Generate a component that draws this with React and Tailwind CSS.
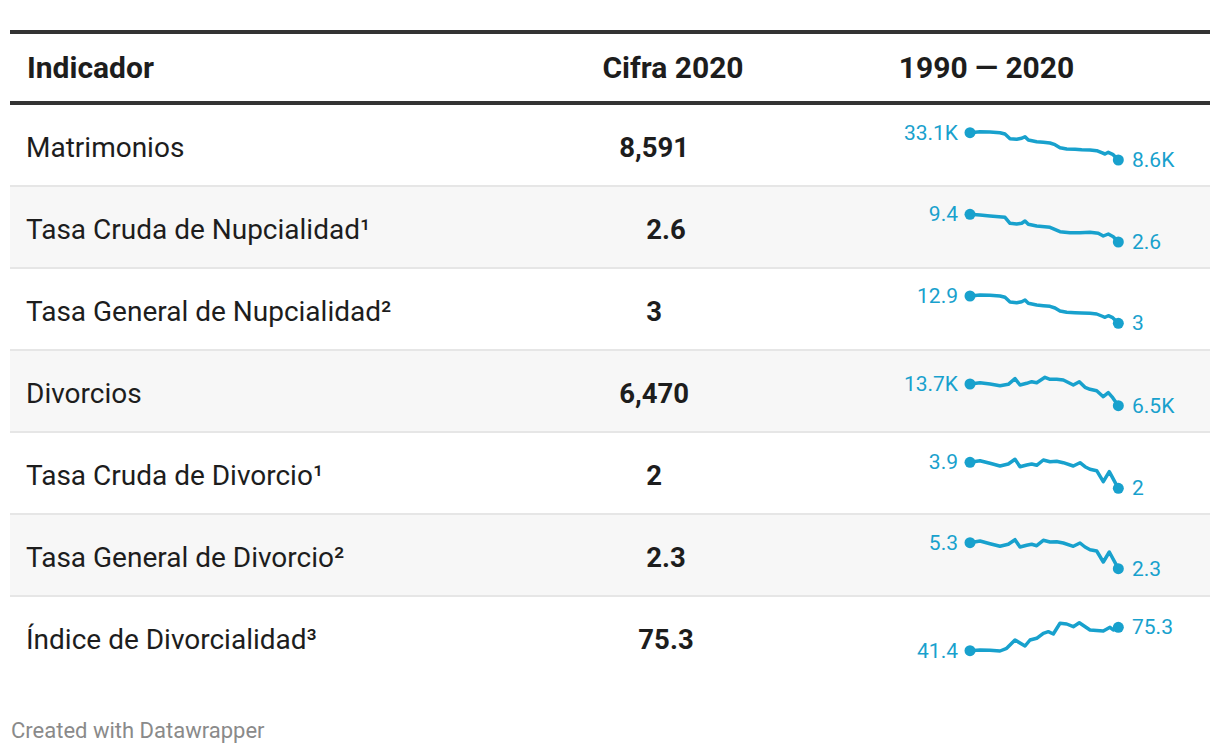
import React from "react";

const M1 = [[240,68],[270,65],[300,66],[330,68],[345,72],[360,86],[380,88],[395,85],[405,80],[415,90],[440,95],[460,97],[480,99],[495,104],[510,113],[530,117],[555,118],[575,119],[600,120],[620,122],[635,128],[645,132],[655,127],[668,133],[685,150]];
const M2 = [[240,313],[270,315],[300,318],[345,322],[360,340],[380,342],[395,340],[405,333],[415,343],[440,348],[480,352],[510,365],[540,368],[570,368],[600,367],[625,370],[640,378],[655,372],[670,380],[685,396]];
const D4 = [[240,342],[270,338],[300,342],[330,347],[355,343],[375,326],[390,345],[410,340],[425,335],[440,338],[465,322],[480,328],[500,328],[520,330],[550,345],[568,335],[585,352],[600,358],[620,362],[640,380],[655,368],[668,383],[685,407]];
const D5 = [[240,97],[270,92],[300,100],[330,108],[355,102],[375,88],[390,110],[410,105],[425,102],[440,106],[460,90],[480,95],[500,94],[520,98],[550,108],[570,98],[585,110],[600,118],[620,122],[640,155],[658,125],[685,175]];
const I7 = [[240,662],[270,660],[300,661],[330,663],[350,655],[375,630],[405,648],[420,630],[440,625],[460,610],[475,605],[490,612],[510,580],[530,582],[550,590],[568,578],[600,600],[640,603],[660,592],[670,600],[685,592]];

const rows = [
  { label: "Matrimonios", value: "8,591", pad: true, trace: M1, off: 5, first: "33.1K", last: "8.6K" },
  { label: "Tasa Cruda de Nupcialidad¹", value: "2.6", pad: false, trace: M2, off: -77, first: "9.4", last: "2.6" },
  { label: "Tasa General de Nupcialidad²", value: "3", pad: true, trace: M1, off: 4.33, first: "12.9", last: "3" },
  { label: "Divorcios", value: "6,470", pad: true, trace: D4, off: -81, first: "13.7K", last: "6.5K" },
  { label: "Tasa Cruda de Divorcio¹", value: "2", pad: true, trace: D5, off: -3, first: "3.9", last: "2" },
  { label: "Tasa General de Divorcio²", value: "2.3", pad: false, trace: D5, off: -4.67, first: "5.3", last: "2.3" },
  { label: "Índice de Divorcialidad³", value: "75.3", pad: false, trace: I7, off: -167, first: "41.4", last: "75.3" },
];

function Spark({ trace, off, first, last }) {
  const pts = trace.map(([x, y]) => [x / 3, y / 3 + off]);
  const d = pts.map((p) => p[0].toFixed(1) + "," + p[1].toFixed(1)).join(" ");
  const s = pts[0];
  const e = pts[pts.length - 1];
  return (
    <svg width="320" height="80" viewBox="0 0 320 80" className="block">
      <polyline points={d} fill="none" stroke="#18a1cd" strokeWidth="3.5" strokeLinejoin="round" strokeLinecap="round" />
      <circle cx={s[0]} cy={s[1]} r="5.5" fill="#18a1cd" />
      <circle cx={e[0]} cy={e[1]} r="5.5" fill="#18a1cd" />
      <text x="68" y={s[1]} textAnchor="end" dominantBaseline="central" fill="#18a1cd" fontSize="21" fontFamily="Roboto, sans-serif">{first}</text>
      <text x="242" y={e[1]} textAnchor="start" dominantBaseline="central" fill="#18a1cd" fontSize="21" fontFamily="Roboto, sans-serif">{last}</text>
    </svg>
  );
}

export default function App() {
  return (
    <div className="w-[1220px] h-[754px] bg-white [font-family:Roboto,sans-serif] text-[#1d1d1d] pt-[30px] px-[10px]">
      <div className="border-t-4 border-[#333333]">
        <div className="grid grid-cols-[556px_200px_444px] h-[71px] items-center border-b-4 border-[#333333] text-[30px] font-bold">
          <div className="pl-[17px]">Indicador</div>
          <div className="text-center pl-[14px]">Cifra 2020</div>
          <div className="text-center pr-[3px]">1990 — 2020</div>
        </div>
        {rows.map((r, i) => (
          <div
            key={r.label}
            className={
              "grid grid-cols-[556px_200px_444px] items-center " +
              (i % 2 === 1 ? "bg-[#f7f7f7] " : "bg-white ") +
              (i < rows.length - 1 ? "h-[82px] border-b-2 border-[#e6e6e6]" : "h-[80px]")
            }
          >
            <div className="pl-[16px] pt-[5px] text-[28px]">{r.label}</div>
            <div className="text-center pt-[5px] text-[27.5px] font-bold">
              {r.value}
              {r.pad ? <span className="invisible">.0</span> : null}
            </div>
            <div className="pl-[124px] self-start">
              <Spark trace={r.trace} off={r.off} first={r.first} last={r.last} />
            </div>
          </div>
        ))}
      </div>
      <div className="mt-[37px] text-[22px] text-[#8a8a8a] pl-px">Created with Datawrapper</div>
    </div>
  );
}
